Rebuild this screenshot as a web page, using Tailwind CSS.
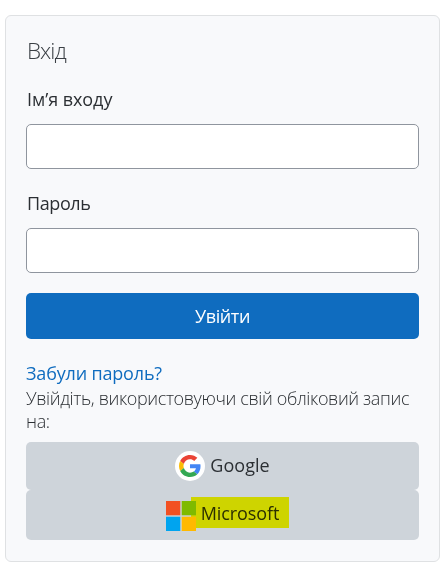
<!DOCTYPE html>
<html lang="uk">
  <head>
    <meta charset="UTF-8" />
    <meta name="viewport" content="width=device-width, initial-scale=1.0" />
    <title>Вхід</title>
    <script src="https://cdn.jsdelivr.net/npm/@tailwindcss/browser@4"></script>
  </head>
  <body class="bg-white pt-[15px] pl-[5px] font-['Open_Sans','Noto_Sans',sans-serif] text-[#2b2f33]">
    <main class="w-[435px] h-[547px] px-5 pt-[19px] rounded-md border border-[#dfe1e3] bg-[#f8f9fb]">
      <h1 class="h-8 mb-4 pl-px text-[22.5px] leading-8 font-light tracking-[-1px] text-[#3a3f44]">Вхід</h1>

      <form>
        <label for="username" class="block h-8 mb-[9px] pl-px text-[18px] leading-8 tracking-[-0.05px]">Ім’я входу</label>
        <input
          type="text"
          id="username"
          class="block w-full h-[45px] mb-[18px] px-3 bg-white border border-[#8f959e] rounded-[5px]"
        />
        <label for="password" class="block h-8 mb-[9px] pl-px text-[18px] leading-8 tracking-[-0.4px]">Пароль</label>
        <input
          type="password"
          id="password"
          class="block w-full h-[45px] mb-5 px-3 bg-white border border-[#8f959e] rounded-[5px]"
        />
        <button
          type="button"
          class="block w-full h-[46px] mb-[22px] bg-[#0f6cbf] text-white text-[18px] rounded-[5px] tracking-[-0.4px]"
        >
          Увійти
        </button>
      </form>

      <a href="#" class="block h-[26px] text-[18px] leading-[25px] text-[#0f6cbf] tracking-[-0.17px]">Забули пароль?</a>
      <p class="h-[55px] text-[18px] leading-[23px] font-light tracking-[-0.37px] whitespace-nowrap">
        Увійдіть, використовуючи свій обліковий запис<br />на:
      </p>

      <a href="#" class="flex h-12 justify-center items-center gap-[5px] bg-[#ced4da] rounded-[5px]">
        <svg class="w-[30px] h-[30px]" viewBox="0 0 30 30">
          <circle cx="15" cy="15" r="15" fill="#fff" />
          <g transform="translate(4 4) scale(0.4583)">
            <path fill="#ea4335" d="M24 9.5c3.54 0 6.71 1.22 9.21 3.6l6.85-6.85C35.9 2.38 30.47 0 24 0 14.62 0 6.51 5.38 2.56 13.22l7.98 6.19C12.43 13.72 17.74 9.5 24 9.5z" />
            <path fill="#4285f4" d="M46.98 24.55c0-1.57-.15-3.09-.38-4.55H24v9.02h12.94c-.58 2.96-2.26 5.48-4.78 7.18l7.73 6c4.51-4.18 7.09-10.36 7.09-17.65z" />
            <path fill="#fbbc05" d="M10.53 28.59c-.48-1.45-.76-2.99-.76-4.59s.27-3.14.76-4.59l-7.98-6.19C.92 16.46 0 20.12 0 24s.92 7.54 2.56 10.78l7.97-6.19z" />
            <path fill="#34a853" d="M24 48c6.48 0 11.93-2.13 15.89-5.81l-7.73-6c-2.15 1.45-4.92 2.3-8.16 2.3-6.26 0-11.57-4.22-13.47-9.91l-7.98 6.19C6.51 42.62 14.62 48 24 48z" />
          </g>
        </svg>
        <span class="pb-0.5 text-[18px] tracking-[0.05px]">Google</span>
      </a>
      <a href="#" class="flex h-[50px] pt-0.5 justify-center items-center gap-[5px] bg-[#ced4da] rounded-[5px]">
        <svg class="w-[30px] h-[30px]" viewBox="0 0 30 30">
          <path fill="#f25022" d="M0 0h14.3v14.3H0z" />
          <path fill="#7fba00" d="M15.7 0H30v14.3H15.7z" />
          <path fill="#00a4ef" d="M0 15.7h14.3V30H0z" />
          <path fill="#ffb900" d="M15.7 15.7H30V30H15.7z" />
        </svg>
        <span class="relative pb-1.5 text-[18px] tracking-[-0.1px]">
          Microsoft
          <!-- marker -->
          <span class="absolute -left-[10px] -top-[3px] w-[98px] h-[31px] bg-[#ffff00] mix-blend-multiply"></span>
        </span>
      </a>
    </main>
  </body>
</html>
